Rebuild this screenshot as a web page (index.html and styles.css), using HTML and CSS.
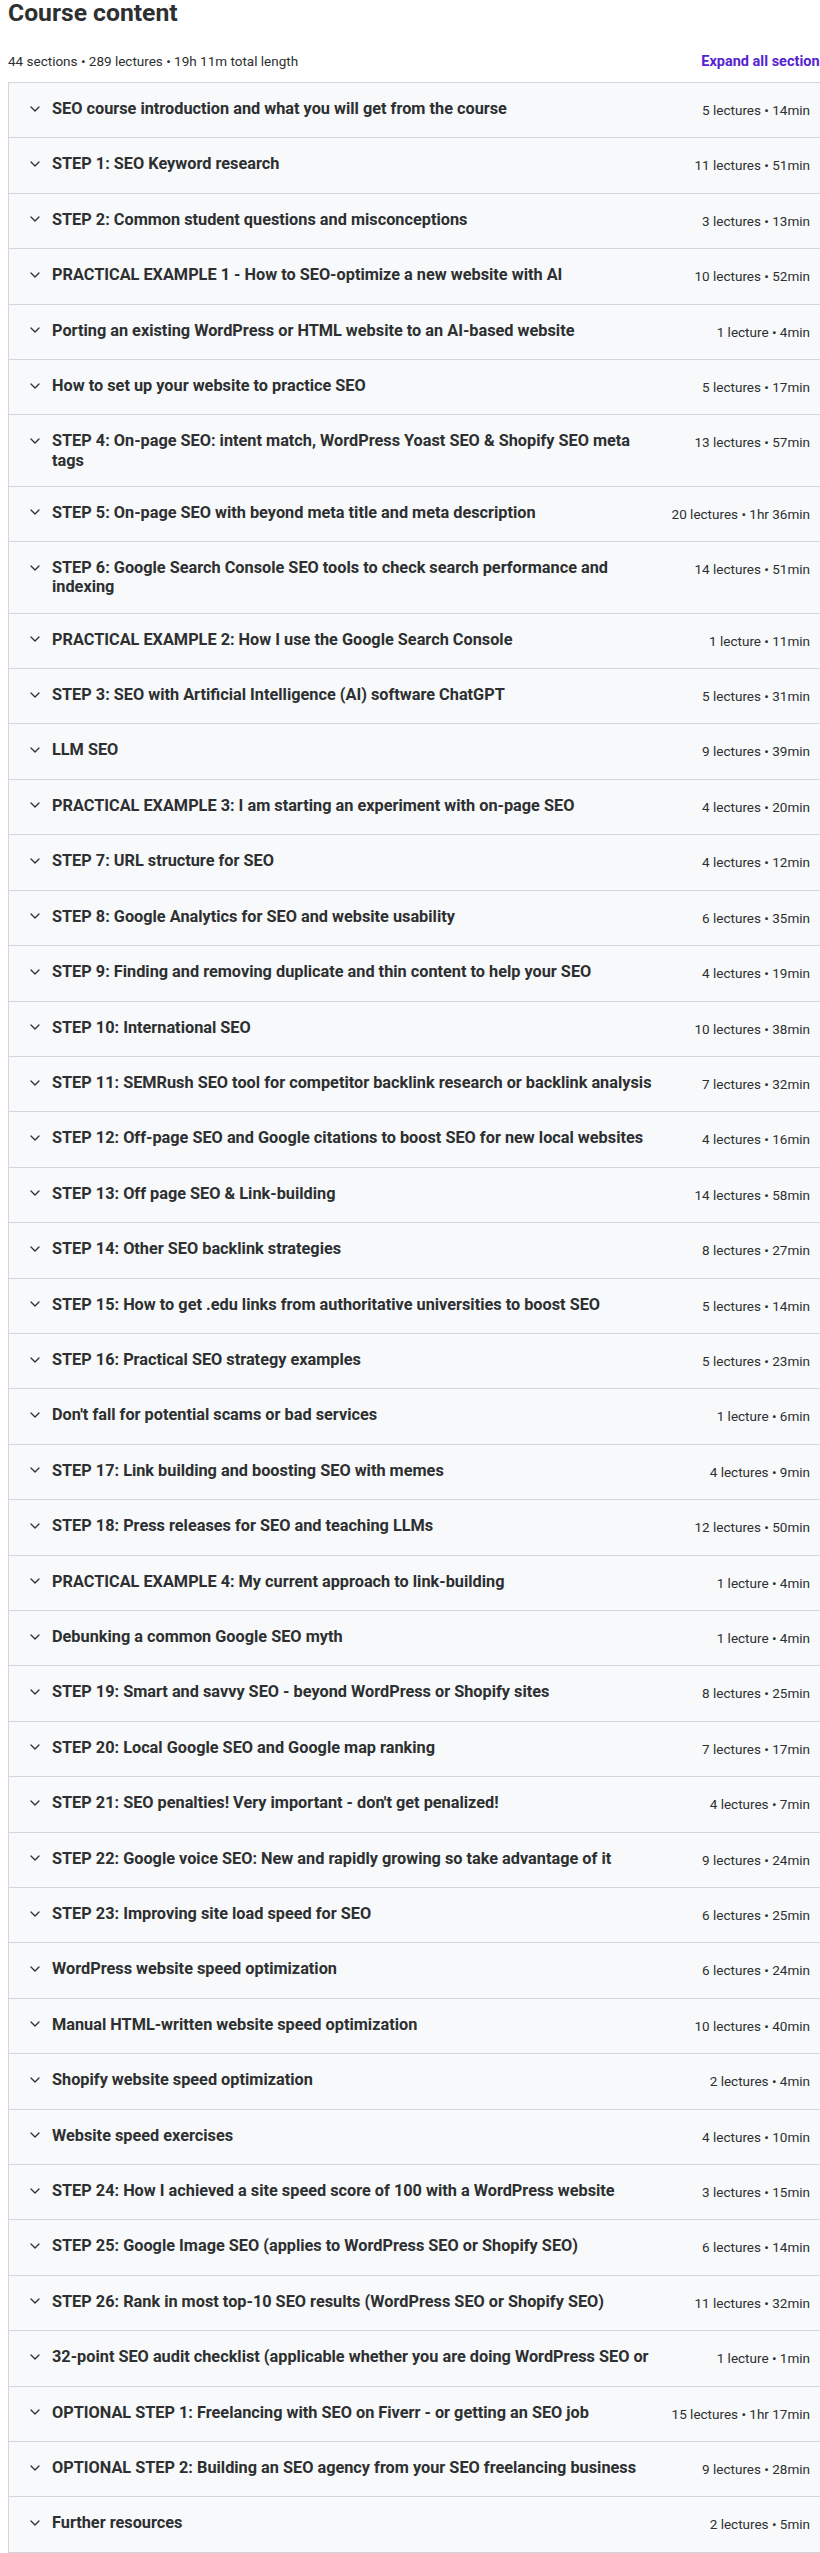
FILE: index.html
```html
<!DOCTYPE html>
<html lang="en">
<head>
<meta charset="utf-8">
<title>Course content</title>
<link rel="stylesheet" href="styles.css">
</head>
<body>
<div class="curriculum">
  <h2 class="heading">Course content</h2>
  <div class="stats-row">
    <span class="stats">44 sections • 289 lectures • 19h 11m total length</span>
    <button class="expand" type="button">Expand all sections</button>
  </div>
  <div class="sections">
    <div class="section"><span class="chev"><svg width="10" height="6" viewBox="0 0 10 6"><polyline points="1,1 5,5 9,1"/></svg></span><span class="title">SEO course introduction and what you will get from the course</span><span class="meta">5 lectures • 14min</span></div>
    <div class="section"><span class="chev"><svg width="10" height="6" viewBox="0 0 10 6"><polyline points="1,1 5,5 9,1"/></svg></span><span class="title">STEP 1: SEO Keyword research</span><span class="meta">11 lectures • 51min</span></div>
    <div class="section"><span class="chev"><svg width="10" height="6" viewBox="0 0 10 6"><polyline points="1,1 5,5 9,1"/></svg></span><span class="title">STEP 2: Common student questions and misconceptions</span><span class="meta">3 lectures • 13min</span></div>
    <div class="section"><span class="chev"><svg width="10" height="6" viewBox="0 0 10 6"><polyline points="1,1 5,5 9,1"/></svg></span><span class="title">PRACTICAL EXAMPLE 1 - How to SEO-optimize a new website with AI</span><span class="meta">10 lectures • 52min</span></div>
    <div class="section"><span class="chev"><svg width="10" height="6" viewBox="0 0 10 6"><polyline points="1,1 5,5 9,1"/></svg></span><span class="title">Porting an existing WordPress or HTML website to an AI-based website</span><span class="meta">1 lecture • 4min</span></div>
    <div class="section"><span class="chev"><svg width="10" height="6" viewBox="0 0 10 6"><polyline points="1,1 5,5 9,1"/></svg></span><span class="title">How to set up your website to practice SEO</span><span class="meta">5 lectures • 17min</span></div>
    <div class="section"><span class="chev"><svg width="10" height="6" viewBox="0 0 10 6"><polyline points="1,1 5,5 9,1"/></svg></span><span class="title">STEP 4: On-page SEO: intent match, WordPress Yoast SEO &amp; Shopify SEO meta tags</span><span class="meta">13 lectures • 57min</span></div>
    <div class="section"><span class="chev"><svg width="10" height="6" viewBox="0 0 10 6"><polyline points="1,1 5,5 9,1"/></svg></span><span class="title">STEP 5: On-page SEO with beyond meta title and meta description</span><span class="meta">20 lectures • 1hr 36min</span></div>
    <div class="section"><span class="chev"><svg width="10" height="6" viewBox="0 0 10 6"><polyline points="1,1 5,5 9,1"/></svg></span><span class="title">STEP 6: Google Search Console SEO tools to check search performance and indexing</span><span class="meta">14 lectures • 51min</span></div>
    <div class="section"><span class="chev"><svg width="10" height="6" viewBox="0 0 10 6"><polyline points="1,1 5,5 9,1"/></svg></span><span class="title">PRACTICAL EXAMPLE 2: How I use the Google Search Console</span><span class="meta">1 lecture • 11min</span></div>
    <div class="section"><span class="chev"><svg width="10" height="6" viewBox="0 0 10 6"><polyline points="1,1 5,5 9,1"/></svg></span><span class="title">STEP 3: SEO with Artificial Intelligence (AI) software ChatGPT</span><span class="meta">5 lectures • 31min</span></div>
    <div class="section"><span class="chev"><svg width="10" height="6" viewBox="0 0 10 6"><polyline points="1,1 5,5 9,1"/></svg></span><span class="title">LLM SEO</span><span class="meta">9 lectures • 39min</span></div>
    <div class="section"><span class="chev"><svg width="10" height="6" viewBox="0 0 10 6"><polyline points="1,1 5,5 9,1"/></svg></span><span class="title">PRACTICAL EXAMPLE 3: I am starting an experiment with on-page SEO</span><span class="meta">4 lectures • 20min</span></div>
    <div class="section"><span class="chev"><svg width="10" height="6" viewBox="0 0 10 6"><polyline points="1,1 5,5 9,1"/></svg></span><span class="title">STEP 7: URL structure for SEO</span><span class="meta">4 lectures • 12min</span></div>
    <div class="section"><span class="chev"><svg width="10" height="6" viewBox="0 0 10 6"><polyline points="1,1 5,5 9,1"/></svg></span><span class="title">STEP 8: Google Analytics for SEO and website usability</span><span class="meta">6 lectures • 35min</span></div>
    <div class="section"><span class="chev"><svg width="10" height="6" viewBox="0 0 10 6"><polyline points="1,1 5,5 9,1"/></svg></span><span class="title">STEP 9: Finding and removing duplicate and thin content to help your SEO</span><span class="meta">4 lectures • 19min</span></div>
    <div class="section"><span class="chev"><svg width="10" height="6" viewBox="0 0 10 6"><polyline points="1,1 5,5 9,1"/></svg></span><span class="title">STEP 10: International SEO</span><span class="meta">10 lectures • 38min</span></div>
    <div class="section"><span class="chev"><svg width="10" height="6" viewBox="0 0 10 6"><polyline points="1,1 5,5 9,1"/></svg></span><span class="title">STEP 11: SEMRush SEO tool for competitor backlink research or backlink analysis</span><span class="meta">7 lectures • 32min</span></div>
    <div class="section"><span class="chev"><svg width="10" height="6" viewBox="0 0 10 6"><polyline points="1,1 5,5 9,1"/></svg></span><span class="title">STEP 12: Off-page SEO and Google citations to boost SEO for new local websites</span><span class="meta">4 lectures • 16min</span></div>
    <div class="section"><span class="chev"><svg width="10" height="6" viewBox="0 0 10 6"><polyline points="1,1 5,5 9,1"/></svg></span><span class="title">STEP 13: Off page SEO &amp; Link-building</span><span class="meta">14 lectures • 58min</span></div>
    <div class="section"><span class="chev"><svg width="10" height="6" viewBox="0 0 10 6"><polyline points="1,1 5,5 9,1"/></svg></span><span class="title">STEP 14: Other SEO backlink strategies</span><span class="meta">8 lectures • 27min</span></div>
    <div class="section"><span class="chev"><svg width="10" height="6" viewBox="0 0 10 6"><polyline points="1,1 5,5 9,1"/></svg></span><span class="title">STEP 15: How to get .edu links from authoritative universities to boost SEO</span><span class="meta">5 lectures • 14min</span></div>
    <div class="section"><span class="chev"><svg width="10" height="6" viewBox="0 0 10 6"><polyline points="1,1 5,5 9,1"/></svg></span><span class="title">STEP 16: Practical SEO strategy examples</span><span class="meta">5 lectures • 23min</span></div>
    <div class="section"><span class="chev"><svg width="10" height="6" viewBox="0 0 10 6"><polyline points="1,1 5,5 9,1"/></svg></span><span class="title">Don't fall for potential scams or bad services</span><span class="meta">1 lecture • 6min</span></div>
    <div class="section"><span class="chev"><svg width="10" height="6" viewBox="0 0 10 6"><polyline points="1,1 5,5 9,1"/></svg></span><span class="title">STEP 17: Link building and boosting SEO with memes</span><span class="meta">4 lectures • 9min</span></div>
    <div class="section"><span class="chev"><svg width="10" height="6" viewBox="0 0 10 6"><polyline points="1,1 5,5 9,1"/></svg></span><span class="title">STEP 18: Press releases for SEO and teaching LLMs</span><span class="meta">12 lectures • 50min</span></div>
    <div class="section"><span class="chev"><svg width="10" height="6" viewBox="0 0 10 6"><polyline points="1,1 5,5 9,1"/></svg></span><span class="title">PRACTICAL EXAMPLE 4: My current approach to link-building</span><span class="meta">1 lecture • 4min</span></div>
    <div class="section"><span class="chev"><svg width="10" height="6" viewBox="0 0 10 6"><polyline points="1,1 5,5 9,1"/></svg></span><span class="title">Debunking a common Google SEO myth</span><span class="meta">1 lecture • 4min</span></div>
    <div class="section"><span class="chev"><svg width="10" height="6" viewBox="0 0 10 6"><polyline points="1,1 5,5 9,1"/></svg></span><span class="title">STEP 19: Smart and savvy SEO - beyond WordPress or Shopify sites</span><span class="meta">8 lectures • 25min</span></div>
    <div class="section"><span class="chev"><svg width="10" height="6" viewBox="0 0 10 6"><polyline points="1,1 5,5 9,1"/></svg></span><span class="title">STEP 20: Local Google SEO and Google map ranking</span><span class="meta">7 lectures • 17min</span></div>
    <div class="section"><span class="chev"><svg width="10" height="6" viewBox="0 0 10 6"><polyline points="1,1 5,5 9,1"/></svg></span><span class="title">STEP 21: SEO penalties! Very important - don't get penalized!</span><span class="meta">4 lectures • 7min</span></div>
    <div class="section"><span class="chev"><svg width="10" height="6" viewBox="0 0 10 6"><polyline points="1,1 5,5 9,1"/></svg></span><span class="title">STEP 22: Google voice SEO: New and rapidly growing so take advantage of it</span><span class="meta">9 lectures • 24min</span></div>
    <div class="section"><span class="chev"><svg width="10" height="6" viewBox="0 0 10 6"><polyline points="1,1 5,5 9,1"/></svg></span><span class="title">STEP 23: Improving site load speed for SEO</span><span class="meta">6 lectures • 25min</span></div>
    <div class="section"><span class="chev"><svg width="10" height="6" viewBox="0 0 10 6"><polyline points="1,1 5,5 9,1"/></svg></span><span class="title">WordPress website speed optimization</span><span class="meta">6 lectures • 24min</span></div>
    <div class="section"><span class="chev"><svg width="10" height="6" viewBox="0 0 10 6"><polyline points="1,1 5,5 9,1"/></svg></span><span class="title">Manual HTML-written website speed optimization</span><span class="meta">10 lectures • 40min</span></div>
    <div class="section"><span class="chev"><svg width="10" height="6" viewBox="0 0 10 6"><polyline points="1,1 5,5 9,1"/></svg></span><span class="title">Shopify website speed optimization</span><span class="meta">2 lectures • 4min</span></div>
    <div class="section"><span class="chev"><svg width="10" height="6" viewBox="0 0 10 6"><polyline points="1,1 5,5 9,1"/></svg></span><span class="title">Website speed exercises</span><span class="meta">4 lectures • 10min</span></div>
    <div class="section"><span class="chev"><svg width="10" height="6" viewBox="0 0 10 6"><polyline points="1,1 5,5 9,1"/></svg></span><span class="title">STEP 24: How I achieved a site speed score of 100 with a WordPress website</span><span class="meta">3 lectures • 15min</span></div>
    <div class="section"><span class="chev"><svg width="10" height="6" viewBox="0 0 10 6"><polyline points="1,1 5,5 9,1"/></svg></span><span class="title">STEP 25: Google Image SEO (applies to WordPress SEO or Shopify SEO)</span><span class="meta">6 lectures • 14min</span></div>
    <div class="section"><span class="chev"><svg width="10" height="6" viewBox="0 0 10 6"><polyline points="1,1 5,5 9,1"/></svg></span><span class="title">STEP 26: Rank in most top-10 SEO results (WordPress SEO or Shopify SEO)</span><span class="meta">11 lectures • 32min</span></div>
    <div class="section"><span class="chev"><svg width="10" height="6" viewBox="0 0 10 6"><polyline points="1,1 5,5 9,1"/></svg></span><span class="title">32-point SEO audit checklist (applicable whether you are doing WordPress SEO or</span><span class="meta">1 lecture • 1min</span></div>
    <div class="section"><span class="chev"><svg width="10" height="6" viewBox="0 0 10 6"><polyline points="1,1 5,5 9,1"/></svg></span><span class="title">OPTIONAL STEP 1: Freelancing with SEO on Fiverr - or getting an SEO job</span><span class="meta">15 lectures • 1hr 17min</span></div>
    <div class="section"><span class="chev"><svg width="10" height="6" viewBox="0 0 10 6"><polyline points="1,1 5,5 9,1"/></svg></span><span class="title">OPTIONAL STEP 2: Building an SEO agency from your SEO freelancing business</span><span class="meta">9 lectures • 28min</span></div>
    <div class="section"><span class="chev"><svg width="10" height="6" viewBox="0 0 10 6"><polyline points="1,1 5,5 9,1"/></svg></span><span class="title">Further resources</span><span class="meta">2 lectures • 5min</span></div>
  </div>
</div>
</body>
</html>
```
FILE: styles.css
```css
html {
  overflow-x: hidden;
  background: #ffffff;
}

body {
  margin: 0 0 0 8px;
  font-family: Roboto, "Liberation Sans", Arial, sans-serif;
  color: #2d2f31;
}

.curriculum {
  width: 819px;
}

.heading {
  margin: 0 0 25px;
  font-size: 24.7px;
  line-height: 26px;
  font-weight: 700;
  color: #2d2f31;
}

.stats-row {
  display: flex;
  justify-content: space-between;
  align-items: baseline;
  height: 20px;
  margin-bottom: 11px;
}

.stats {
  font-size: 13.5px;
  line-height: 20px;
  color: #2d2f31;
}

.expand {
  border: 0;
  padding: 0;
  background: none;
  font-family: Roboto, "Liberation Sans", Arial, sans-serif;
  font-size: 14.5px;
  line-height: 20px;
  font-weight: 700;
  color: #5624d0;
  cursor: pointer;
  white-space: nowrap;
}

.sections {
  border: 1px solid #d1d7dc;
  border-bottom: 0;
}

.section {
  display: flex;
  align-items: flex-start;
  padding: 16px 16px 16px 21px;
  background: #f7f9fa;
  border-bottom: 1px solid #d1d7dc;
}

.chev {
  flex: none;
  display: flex;
  align-items: center;
  height: 19.2px;
  margin-right: 12px;
}

.chev svg {
  display: block;
  fill: none;
  stroke: #2d2f31;
  stroke-width: 1.3;
  stroke-linecap: round;
  stroke-linejoin: round;
}

.title {
  flex: 1;
  font-size: 16.3px;
  line-height: 19.2px;
  font-weight: 700;
  color: #2d2f31;
}

.meta {
  flex: none;
  margin-left: 36px;
  font-size: 13.5px;
  line-height: 22.4px;
  color: #2d2f31;
  white-space: nowrap;
}
```
